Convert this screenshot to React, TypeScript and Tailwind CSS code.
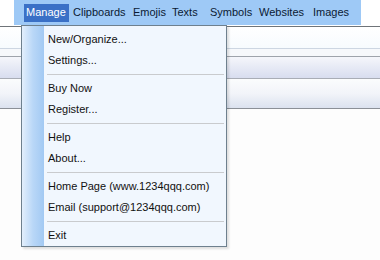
import React from 'react';

const menus = [
  { label: 'Manage', w: 'w-[45px] pl-[2px]' },
  { label: 'Clipboards', w: 'w-[60px] pl-[4px]' },
  { label: 'Emojis', w: 'w-[39px] pl-[4px]' },
  { label: 'Texts', w: 'w-[38px] pl-[4px]' },
  { label: 'Symbols', w: 'w-[49px] pl-[4px]' },
  { label: 'Websites', w: 'w-[54px] pl-[4px]' },
  { label: 'Images', w: 'w-[48px] pl-[4px]' },
];

type Entry = { label: string } | 'sep';

const items: Entry[] = [
  { label: 'New/Organize...' },
  { label: 'Settings...' },
  'sep',
  { label: 'Buy Now' },
  { label: 'Register...' },
  'sep',
  { label: 'Help' },
  { label: 'About...' },
  'sep',
  { label: 'Home Page (www.1234qqq.com)' },
  { label: 'Email (support@1234qqq.com)' },
  'sep',
  { label: 'Exit' },
];

const MenuBar: React.FC = () => (
  <div className="ml-[14px] flex h-[25px] w-[347px] items-center bg-[#9ec9f6] pl-[10px]">
    {menus.map((m, i) => (
      <span
        key={m.label}
        className={
          i === 0
            ? `flex h-[18px] shrink-0 items-center bg-[#3a70c6] text-white ${m.w}`
            : `flex h-[18px] shrink-0 items-center text-[#0b1a33] ${m.w}`
        }
      >
        {m.label}
      </span>
    ))}
  </div>
);

const Dropdown: React.FC = () => (
  <div className="absolute left-[21px] top-[25px] flex h-[222px] w-[206px] border border-[#6e808e] bg-[#f1f7fe] shadow-[2px_2px_2px_rgba(0,0,0,0.12)]">
    <div className="w-[22px] shrink-0 bg-gradient-to-r from-[#e3effc] via-[#b9d7f7] to-[#a2c9f3]" />
    <div className="flex flex-1 flex-col pt-[3px]">
      {items.map((it, i) =>
        it === 'sep' ? (
          <div key={i} className="flex h-[7px] items-center pl-[3px] pr-[2px]">
            <div className="h-px w-full bg-[#c9cbce]" />
          </div>
        ) : (
          <div key={i} className="flex h-[21px] items-center pl-[4px] text-[#111]">
            {it.label}
          </div>
        )
      )}
    </div>
  </div>
);

export default function App() {
  return (
    <div className="relative h-[260px] w-[380px] overflow-hidden bg-white text-[11px] leading-none font-['Liberation_Sans',Arial,sans-serif]">
      <MenuBar />
      <div className="h-px bg-white" />
      <div className="h-px bg-[#6f7479]" />
      <div className="h-[21px] bg-gradient-to-b from-white to-[#f7fbfe]" />
      <div className="h-px bg-[#cdd6e2]" />
      <div className="h-[7px] bg-[#f6f8fb]" />
      <div className="h-px bg-[#9ea3ab]" />
      <div className="h-[21px] bg-gradient-to-b from-[#f5f6fb] to-[#d8ddef]" />
      <div className="h-px bg-[#a9adb6]" />
      <div className="h-[29px] bg-gradient-to-b from-[#fbfcfd] via-[#f2f4f9] to-[#dbe2ef]" />
      <div className="h-px bg-[#8b9097]" />
      <div className="h-[151px] bg-[#fdfdfd]" />
      <Dropdown />
    </div>
  );
}
